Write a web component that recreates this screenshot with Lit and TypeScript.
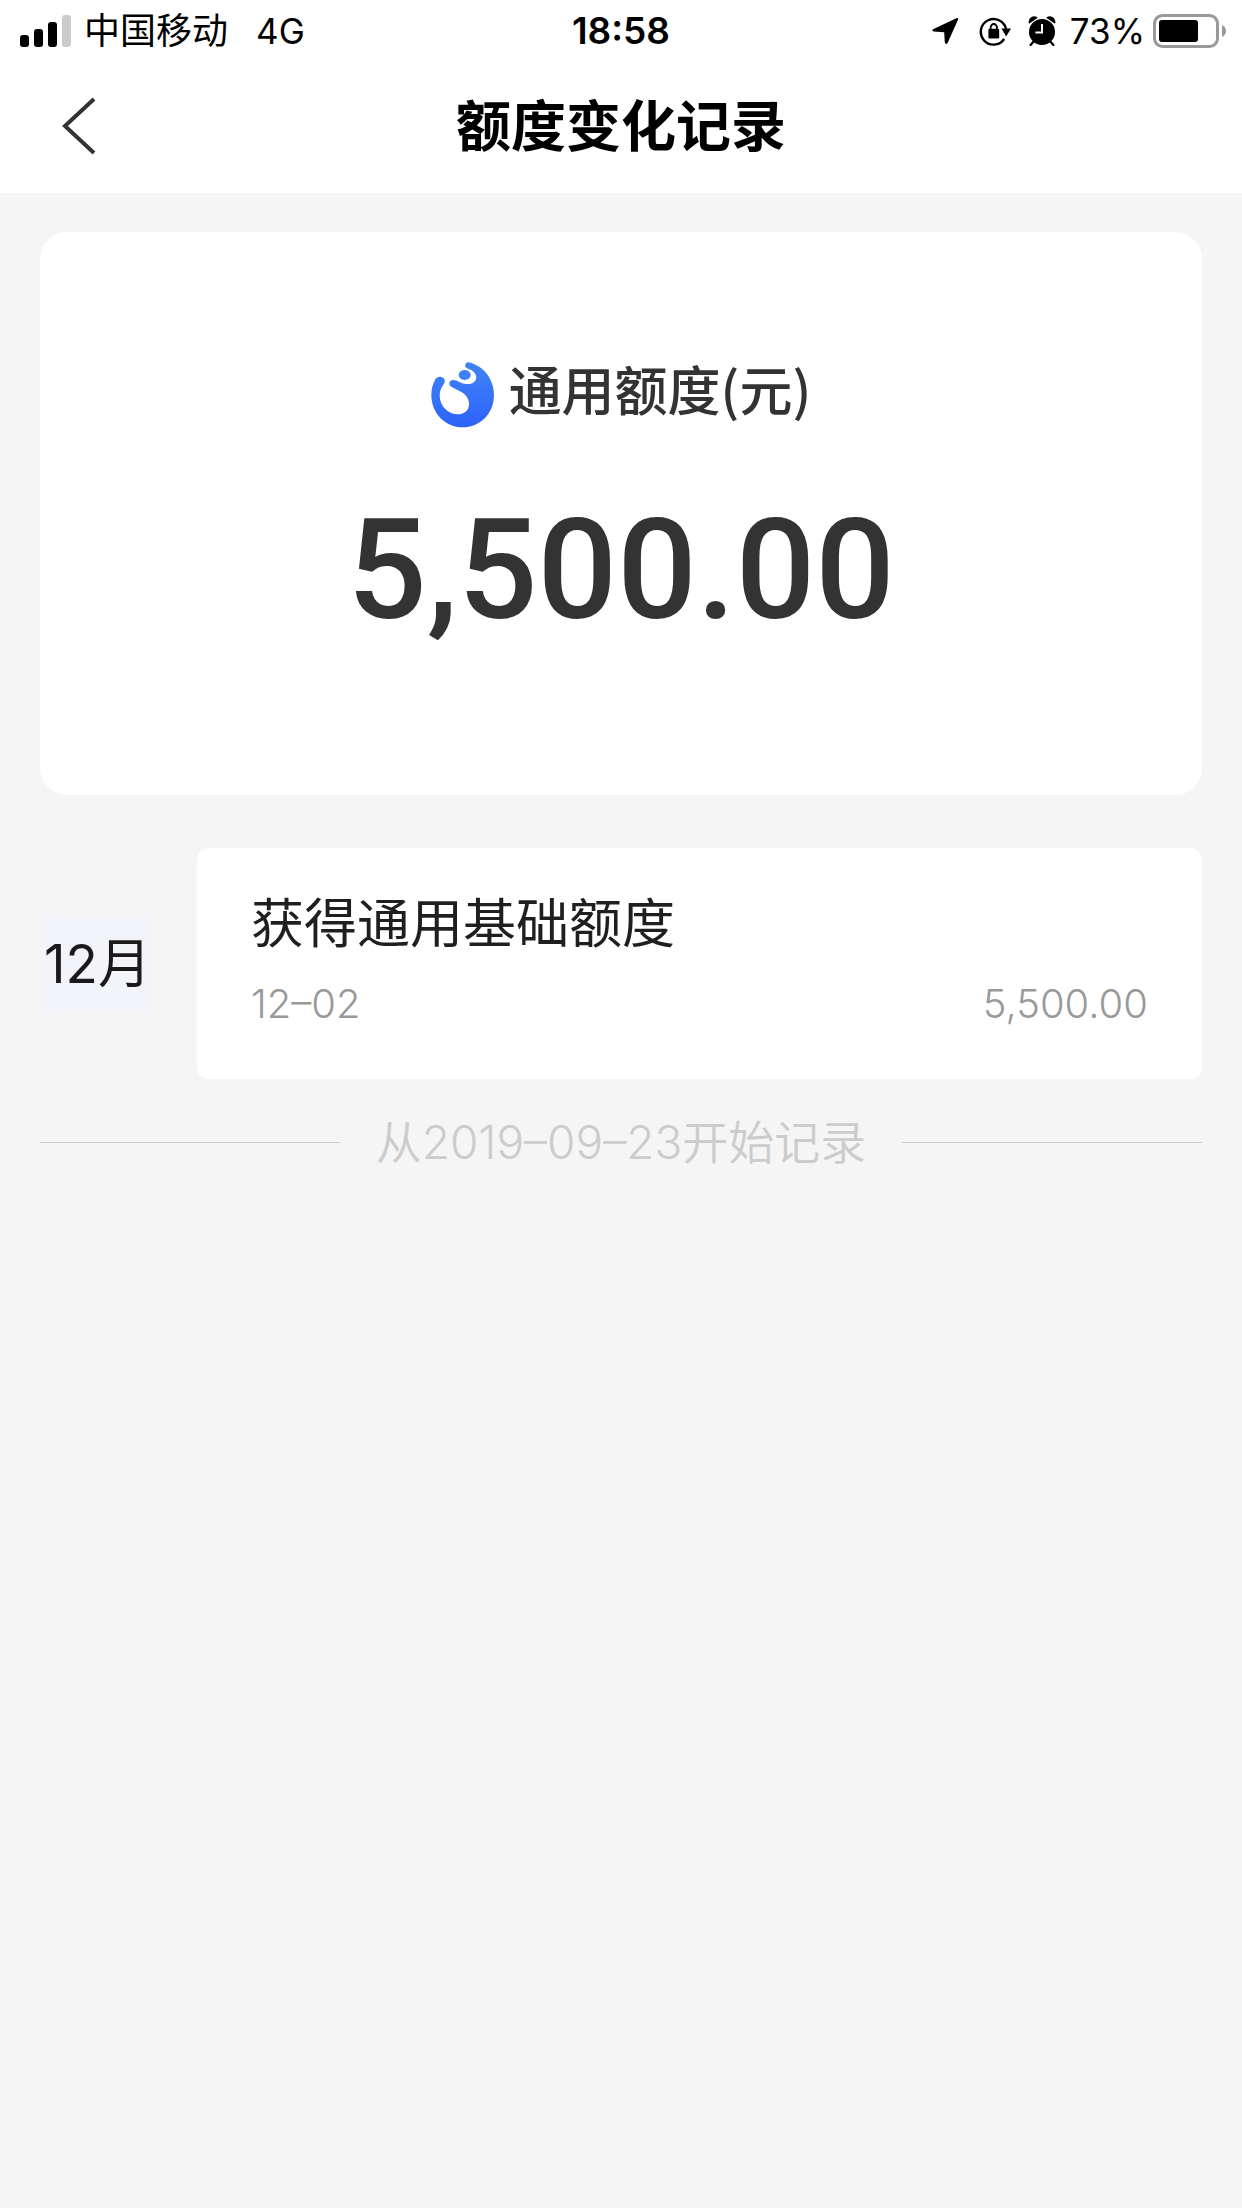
import { LitElement, html, css } from "lit";
import { customElement, property } from "lit/decorators.js";

interface QuotaRecord {
  title: string;
  date: string;
  amount: string;
}

@customElement("status-bar")
class StatusBar extends LitElement {
  @property() carrier = "";
  @property() network = "";
  @property() time = "";
  @property({ type: Number }) battery = 0;

  static styles = css`
    :host {
      display: grid;
      grid-template-columns: 1fr auto 1fr;
      align-items: center;
      height: 62px;
      padding: 0 16px;
      background: #fff;
      color: #000;
      font-size: 36px;
      line-height: 62px;
    }
    .side {
      display: flex;
      align-items: center;
    }
    .signal {
      margin-left: 4px;
    }
    .end {
      justify-content: flex-end;
    }
    .carrier {
      margin: 0 28px 0 12px;
    }
    .network {
      font-size: 35px;
    }
    .time {
      font-size: 37px;
      font-weight: 600;
    }
    .lock {
      margin: 0 17px 0 20px;
    }
    .percent {
      margin: 0 8px 0 14px;
      font-size: 35px;
    }
    svg {
      display: block;
      flex: none;
    }
  `;

  render() {
    return html`
      <div class="side">
        <svg class="signal" width="52" height="34" viewBox="0 0 52 34" aria-hidden="true">
          <rect x="0" y="21" width="9" height="12" rx="3" />
          <rect x="14" y="15" width="9" height="18" rx="3" />
          <rect x="28" y="8" width="9" height="25" rx="3" />
          <rect x="42" y="1" width="9" height="32" rx="3" fill="#cbcbcb" />
        </svg>
        <span class="carrier">${this.carrier}</span>
        <span class="network">${this.network}</span>
      </div>
      <time class="time">${this.time}</time>
      <div class="side end">
        <svg width="27" height="28" viewBox="0 0 27 28" aria-hidden="true">
          <path d="M1 12.2 L24.4 1.2 Q26.6 .6 26 2.8 L15.6 26 Q14 28 12.8 25.6 L12.2 15.2 L1.6 14.4 Q-.6 13.6 1 12.2Z" />
        </svg>
        <svg class="lock" width="32" height="30" viewBox="0 0 32 30" aria-hidden="true">
          <path d="M27.2 13.6 A12.8 12.8 0 1 0 25.2 23" fill="none" stroke="#000" stroke-width="2.4" />
          <path d="M22.4 12.6 H32 L27.2 20.6Z" />
          <rect x="9.4" y="12.8" width="10.8" height="9.6" rx="1.2" />
          <path d="M11.6 14 V11.4 a3.2 3.4 0 0 1 6.4 0 V14" fill="none" stroke="#000" stroke-width="1.8" />
        </svg>
        <svg width="28" height="30" viewBox="0 0 28 30" aria-hidden="true">
          <circle cx="14" cy="16" r="13" />
          <path d="M1.4 6.6 A5 5 0 0 1 8.6 1.6Z M26.6 6.6 A5 5 0 0 0 19.4 1.6Z" stroke="#000" stroke-width="1.6" stroke-linejoin="round" />
          <path d="M5.6 25.6 L2.6 29 M22.4 25.6 L25.4 29" stroke="#000" stroke-width="2.2" stroke-linecap="round" />
          <path d="M14 8 V16.4 H7.4" fill="none" stroke="#fff" stroke-width="2" />
        </svg>
        <span class="percent">${this.battery}%</span>
        <svg width="73" height="34" viewBox="0 0 73 34" aria-hidden="true">
          <rect x="1.5" y="1.5" width="63" height="31" rx="8" fill="none" stroke="#999" stroke-width="3" />
          <rect x="6" y="6" width=${Math.round(this.battery * 0.53)} height="22" rx="3" />
          <path d="M69 11 Q73 13 73 17 T69 23Z" fill="#999" />
        </svg>
      </div>
    `;
  }
}

@customElement("page-header")
class PageHeader extends LitElement {
  @property() heading = "";

  static styles = css`
    :host {
      display: grid;
      grid-template-columns: 1fr auto 1fr;
      align-items: center;
      height: 127px;
      padding: 0 40px 4px;
      background: #fff;
    }
    .back {
      display: flex;
      justify-self: start;
      align-items: center;
      width: 80px;
      height: 88px;
      padding: 0 21px;
      border: 0;
      background: none;
      cursor: pointer;
    }
    .title {
      margin: 0;
      color: #000;
      font-size: 55px;
      font-weight: 700;
      line-height: 80px;
    }
  `;

  render() {
    return html`
      <button class="back" type="button" aria-label="返回">
        <svg width="36" height="58" viewBox="0 0 36 58" aria-hidden="true">
          <path d="M33 2 L4 29 L33 56" fill="none" stroke="#333" stroke-width="4" />
        </svg>
      </button>
      <h1 class="title">${this.heading}</h1>
    `;
  }
}

@customElement("quota-card")
class QuotaCard extends LitElement {
  @property() label = "";
  @property() amount = "";

  static styles = css`
    :host {
      display: flex;
      flex-direction: column;
      align-items: center;
      padding: 116px 40px 125px;
      border-radius: 27px;
      background: #fff;
      color: #333;
    }
    .label {
      display: flex;
      align-items: center;
      gap: 15px;
      margin: 0;
      font-family: "Noto Sans CJK SC", sans-serif;
      font-size: 53px;
      font-weight: 500;
      line-height: 80px;
    }
    .logo {
      display: block;
      margin-top: 14px;
    }
    .amount {
      margin: 42px 0 0;
      font-family: Roboto, sans-serif;
      font-size: 140px;
      font-weight: 500;
      line-height: 200px;
    }
  `;

  render() {
    return html`
      <h2 class="label">
        <svg class="logo" width="63" height="66" viewBox="95 65 189 198" aria-hidden="true">
          <defs>
            <linearGradient id="blue" x1="0" y1="0" x2="0" y2="1">
              <stop offset="0" stop-color="#3f85f6" />
              <stop offset="1" stop-color="#2d62fa" />
            </linearGradient>
          </defs>
          <path
            fill="url(#blue)"
            d="M208 66 C252 76 284 116 284 164 C284 220 242 261 190 261 C137 261 96 218 96 164 C96 145 101 129 108 117 C112 108 124 107 131 112 C138 117 138 124 133 132 C125 144 121 153 121 167 C122 199 148 223 178 222 C198 221 210 208 209 188 C208 170 194 158 179 151 C169 146 159 142 153 137 C147 130 151 119 162 119 C169 119 176 123 185 127 C202 134 220 133 228 121 C236 108 227 94 213 88 C201 83 196 80 198 73 C199 68 203 65 208 66Z"
          />
          <ellipse cx="196" cy="104" rx="18" ry="15" fill="#3d80f7" />
        </svg>
        <span>${this.label}</span>
      </h2>
      <p class="amount">${this.amount}</p>
    `;
  }
}

@customElement("month-records")
class MonthRecords extends LitElement {
  @property() month = "";
  @property({ attribute: false }) records: QuotaRecord[] = [];

  static styles = css`
    :host {
      display: grid;
      grid-template-columns: 114px 1fr;
      align-items: center;
      gap: 43px;
    }
    .month {
      margin: 0;
      padding-left: 4px;
      background: #f3f4fa;
      color: #1a1a1a;
      font-size: 53px;
      font-weight: 400;
      line-height: 100px;
      white-space: nowrap;
    }
    .list {
      display: grid;
      gap: 20px;
      margin: 0;
      padding: 0;
      list-style: none;
    }
    .record {
      padding: 36px 54px 45px;
      border-radius: 12px;
      background: #fff;
    }
    .name {
      margin: 0;
      color: #1f1f1f;
      font-size: 53px;
      font-weight: 400;
      line-height: 80px;
    }
    .meta {
      display: flex;
      justify-content: space-between;
      margin-top: 10px;
      color: #999;
      font-size: 40px;
      font-weight: 350;
      line-height: 60px;
    }
  `;

  render() {
    return html`
      <h2 class="month">${this.month}</h2>
      <ul class="list">
        ${this.records.map(
          (r) => html`
            <li class="record">
              <h3 class="name">${r.title}</h3>
              <div class="meta"><time>${r.date}</time><span>${r.amount}</span></div>
            </li>
          `
        )}
      </ul>
    `;
  }
}

@customElement("app-root")
class AppRoot extends LitElement {
  static styles = css`
    :host {
      display: block;
      min-height: 100vh;
      background: #f5f5f5;
      font-family: Inter, "Noto Sans CJK SC", sans-serif;
    }
    .content {
      display: flex;
      flex-direction: column;
      padding: 39px 40px;
    }
    .records {
      margin-top: 53px;
    }
    .since {
      display: flex;
      align-items: center;
      gap: 36px;
      margin: 28px 0 0;
      color: #ccc;
      font-size: 46px;
      font-weight: 350;
      line-height: 70px;
    }
    .since::before,
    .since::after {
      content: "";
      flex: 1;
      height: 1px;
      background: #ccc;
    }
  `;

  private records: QuotaRecord[] = [
    { title: "获得通用基础额度", date: "12–02", amount: "5,500.00" },
  ];

  render() {
    return html`
      <status-bar carrier="中国移动" network="4G" time="18:58" battery="73"></status-bar>
      <page-header heading="额度变化记录"></page-header>
      <main class="content">
        <quota-card label="通用额度(元)" amount="5,500.00"></quota-card>
        <month-records class="records" month="12月" .records=${this.records}></month-records>
        <p class="since">从2019–09–23开始记录</p>
      </main>
    `;
  }
}
